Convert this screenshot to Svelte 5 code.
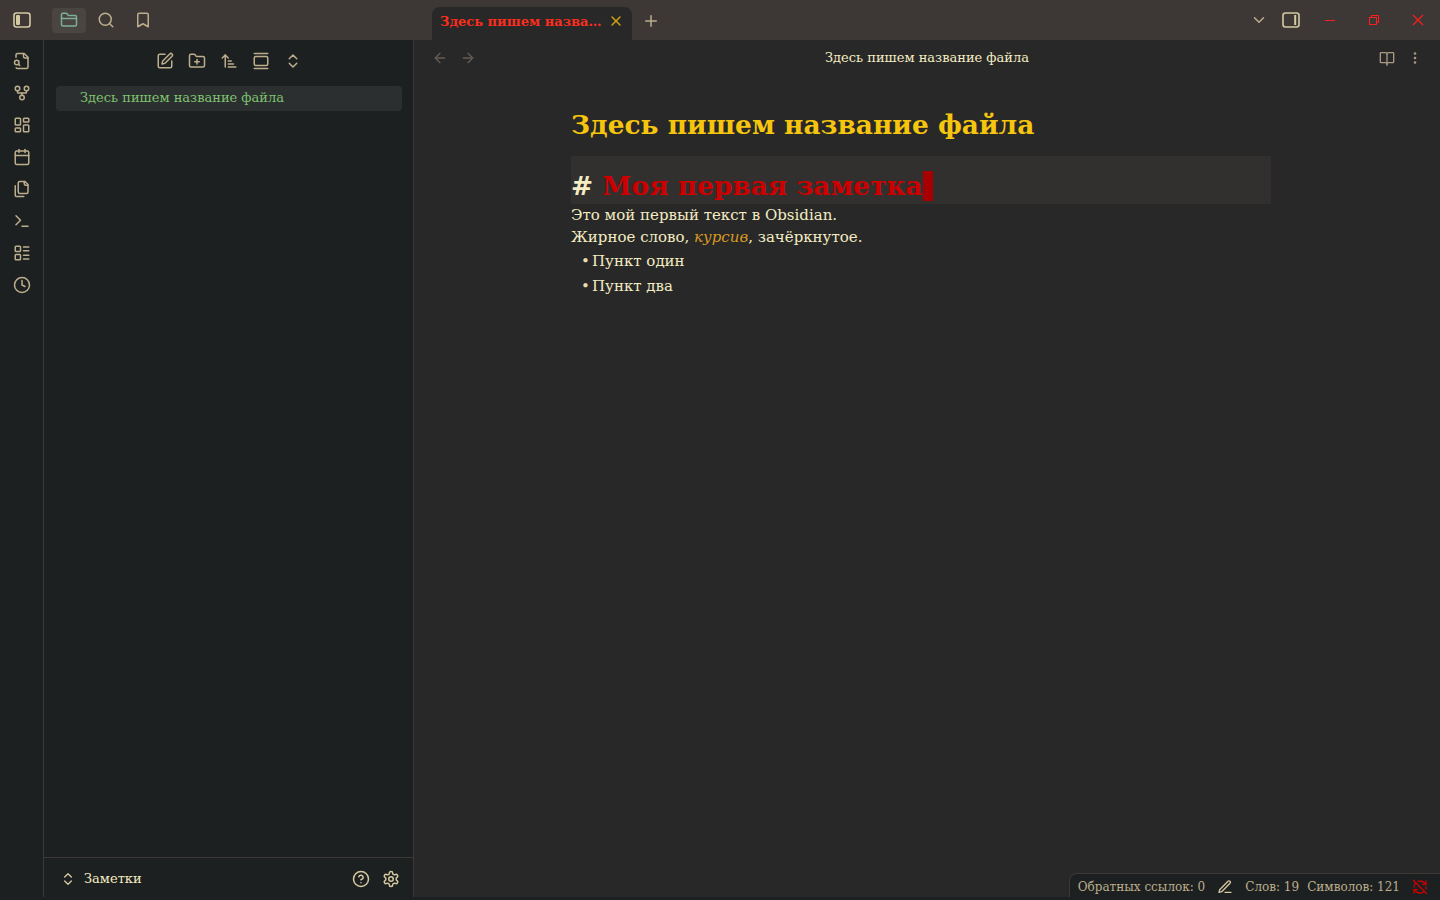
<script lang="ts">
  const icons: Record<string, string> = {
    folder: '<path d="M20 20a2 2 0 0 0 2-2V8a2 2 0 0 0-2-2h-7.9a2 2 0 0 1-1.69-.9L9.6 3.9A2 2 0 0 0 7.93 3H4a2 2 0 0 0-2 2v13a2 2 0 0 0 2 2Z"/><path d="M2 10h20"/>',
    search: '<circle cx="11" cy="11" r="8"/><path d="m21 21-4.3-4.3"/>',
    bookmark: '<path d="m19 21-7-4-7 4V5a2 2 0 0 1 2-2h10a2 2 0 0 1 2 2v16z"/>',
    pen: '<path d="M12 3H5a2 2 0 0 0-2 2v14a2 2 0 0 0 2 2h14a2 2 0 0 0 2-2v-7"/><path d="M18.375 2.625a1 1 0 0 1 3 3l-9.013 9.014a2 2 0 0 1-.853.505l-2.873.84a.5.5 0 0 1-.62-.62l.84-2.873a2 2 0 0 1 .506-.852z"/>',
    folderPlus: '<path d="M12 10v6"/><path d="M9 13h6"/><path d="M20 20a2 2 0 0 0 2-2V8a2 2 0 0 0-2-2h-7.9a2 2 0 0 1-1.69-.9L9.6 3.9A2 2 0 0 0 7.93 3H4a2 2 0 0 0-2 2v13a2 2 0 0 0 2 2Z"/>',
    sort: '<path d="m3 8 4-4 4 4"/><path d="M7 4v16"/><path d="M11 12h4"/><path d="M11 16h7"/><path d="M11 20h10"/>',
    gallery: '<path d="M3 2h18"/><rect x="3" y="6" width="18" height="12" rx="2"/><path d="M3 22h18"/>',
    chevrons: '<path d="m7 15 5 5 5-5"/><path d="m7 9 5-5 5 5"/>',
    fileSearch: '<path d="M14 2v4a2 2 0 0 0 2 2h4"/><path d="M4.268 21a2 2 0 0 0 1.727 1H18a2 2 0 0 0 2-2V7l-5-5H6a2 2 0 0 0-2 2v3"/><path d="m9 18-1.5-1.5"/><circle cx="5" cy="14" r="3"/>',
    fork: '<circle cx="12" cy="18" r="3"/><circle cx="6" cy="6" r="3"/><circle cx="18" cy="6" r="3"/><path d="M18 9v2c0 .6-.4 1-1 1H7c-.6 0-1-.4-1-1V9"/><path d="M12 12v3"/>',
    dashboard: '<rect x="3" y="3" width="7" height="9" rx="1"/><rect x="14" y="3" width="7" height="5" rx="1"/><rect x="14" y="12" width="7" height="9" rx="1"/><rect x="3" y="16" width="7" height="5" rx="1"/>',
    calendar: '<path d="M8 2v4"/><path d="M16 2v4"/><rect x="3" y="4" width="18" height="18" rx="2"/><path d="M3 10h18"/>',
    files: '<path d="M20 7h-3a2 2 0 0 1-2-2V2"/><path d="M9 18a2 2 0 0 1-2-2V4a2 2 0 0 1 2-2h7l4 4v10a2 2 0 0 1-2 2Z"/><path d="M3 7.6v12.8A1.6 1.6 0 0 0 4.6 22h9.8"/>',
    terminal: '<path d="m4 17 6-6-6-6"/><path d="M12 19h8"/>',
    list: '<rect x="3" y="3" width="7" height="7" rx="1"/><rect x="3" y="14" width="7" height="7" rx="1"/><path d="M14 4h7"/><path d="M14 9h7"/><path d="M14 15h7"/><path d="M14 20h7"/>',
    clock: '<circle cx="12" cy="12" r="10"/><path d="M12 6v6l4 2"/>',
    chevronDown: '<path d="m6 9 6 6 6-6"/>',
    plus: '<path d="M5 12h14"/><path d="M12 5v14"/>',
    x: '<path d="M18 6 6 18"/><path d="m6 6 12 12"/>',
    left: '<path d="m12 19-7-7 7-7"/><path d="M19 12H5"/>',
    right: '<path d="M5 12h14"/><path d="m12 5 7 7-7 7"/>',
    book: '<path d="M12 6a2 2 0 0 0-2-2H3a1 1 0 0 0-1 1v13a1 1 0 0 0 1 1h7a2 2 0 0 1 2 2 2 2 0 0 1 2-2h7a1 1 0 0 0 1-1V5a1 1 0 0 0-1-1h-7a2 2 0 0 0-2 2z"/><path d="M12 6v17"/>',
    help: '<circle cx="12" cy="12" r="10"/><path d="M9.09 9a3 3 0 0 1 5.83 1c0 2-3 3-3 3"/><path d="M12 17h.01"/>',
    gear: '<path d="M12.22 2h-.44a2 2 0 0 0-2 2v.18a2 2 0 0 1-1 1.73l-.43.25a2 2 0 0 1-2 0l-.15-.08a2 2 0 0 0-2.73.73l-.22.38a2 2 0 0 0 .73 2.73l.15.1a2 2 0 0 1 1 1.72v.51a2 2 0 0 1-1 1.74l-.15.09a2 2 0 0 0-.73 2.73l.22.38a2 2 0 0 0 2.73.73l.15-.08a2 2 0 0 1 2 0l.43.25a2 2 0 0 1 1 1.73V20a2 2 0 0 0 2 2h.44a2 2 0 0 0 2-2v-.18a2 2 0 0 1 1-1.73l.43-.25a2 2 0 0 1 2 0l.15.08a2 2 0 0 0 2.73-.73l.22-.39a2 2 0 0 0-.73-2.73l-.15-.08a2 2 0 0 1-1-1.74v-.5a2 2 0 0 1 1-1.74l.15-.09a2 2 0 0 0 .73-2.73l-.22-.38a2 2 0 0 0-2.73-.73l-.15.08a2 2 0 0 1-2 0l-.43-.25a2 2 0 0 1-1-1.73V4a2 2 0 0 0-2-2z"/><circle cx="12" cy="12" r="3"/>',
    penLine: '<path d="M12 20h9"/><path d="M16.5 3.5a2.12 2.12 0 0 1 3 3L7 19l-4 1 1-4Z"/>',
    syncOff: '<path d="M21 8 18.74 5.74A9.75 9.75 0 0 0 12 3c-1 0-1.97.16-2.87.47"/><path d="M8 16H3v5"/><path d="M3 12c0-2.49 1-4.74 2.64-6.36"/><path d="m3 16 2.26 2.26A9.75 9.75 0 0 0 12 21c2.49 0 4.74-1 6.36-2.64"/><path d="M21 12c0 1-.16 1.97-.47 2.87"/><path d="M21 3v5h-5"/><path d="M22 22 2 2"/>'
  };

  const ribbon = ["fileSearch", "fork", "dashboard", "calendar", "files", "terminal", "list", "clock"];
  const navTools = ["pen", "folderPlus", "sort", "gallery", "chevrons"];
</script>

{#snippet icon(name: string, size = 18, cls = "")}
  <svg class={cls} width={size} height={size} viewBox="0 0 24 24" fill="none" stroke="currentColor" stroke-width="2" stroke-linecap="round" stroke-linejoin="round">
    {@html icons[name]}
  </svg>
{/snippet}

<div class="app">
  <header class="titlebar">
    <div class="left-tabs">
      <button class="tb-btn sidebar-toggle">
        <svg width="18" height="18" viewBox="0 0 18 18" fill="none">
          <rect x="1" y="2" width="16" height="14" rx="2.5" stroke="currentColor" stroke-width="1.6" />
          <rect x="3" y="4" width="4" height="10" rx="1" fill="currentColor" />
        </svg>
      </button>
      <div class="nav-tabs">
        <button class="tb-btn nav-tab active">{@render icon("folder", 18)}</button>
        <button class="tb-btn nav-tab">{@render icon("search", 18)}</button>
        <button class="tb-btn nav-tab">{@render icon("bookmark", 18)}</button>
      </div>
    </div>

    <div class="tabstrip">
      <div class="tab">
        <span class="tab-title">Здесь пишем название файла</span>
        {@render icon("x", 16, "tab-close")}
      </div>
      <button class="tb-btn new-tab">{@render icon("plus", 18)}</button>
    </div>

    <div class="right-controls">
      <button class="tb-btn chevron">{@render icon("chevronDown", 18)}</button>
      <button class="tb-btn right-toggle">
        <svg width="18" height="18" viewBox="0 0 18 18" fill="none">
          <rect x="1" y="2" width="16" height="14" rx="2.5" stroke="currentColor" stroke-width="1.6" />
          <rect x="12.2" y="4" width="2" height="10" fill="currentColor" />
        </svg>
      </button>
      <div class="win-controls">
        <button class="win-btn" aria-label="Свернуть">
          <svg width="12" height="12" viewBox="0 0 12 12"><path d="M1 6.5h10" stroke="currentColor" stroke-width="1" /></svg>
        </button>
        <button class="win-btn" aria-label="Развернуть">
          <svg width="12" height="12" viewBox="0 0 12 12" fill="none" stroke="currentColor"><rect x="1.5" y="3.5" width="7" height="7" /><path d="M3.5 3.5v-2h7v7h-2" /></svg>
        </button>
        <button class="win-btn" aria-label="Закрыть">
          <svg width="12" height="12" viewBox="0 0 12 12"><path d="M1 1l10 10M11 1L1 11" stroke="currentColor" stroke-width="1.2" /></svg>
        </button>
      </div>
    </div>
  </header>

  <div class="body">
    <aside class="ribbon">
      {#each ribbon as name}
        <button class="ribbon-btn">{@render icon(name, 18)}</button>
      {/each}
    </aside>

    <section class="sidebar">
      <div class="nav-header">
        {#each navTools as name}
          <button class="nav-tool">{@render icon(name, 18)}</button>
        {/each}
      </div>
      <div class="file-tree">
        <div class="file-item">Здесь пишем название файла</div>
      </div>
      <div class="vault-bar">
        {@render icon("chevrons", 16, "vault-chevrons")}
        <span class="vault-name">Заметки</span>
        <div class="vault-actions">
          {@render icon("help", 18)}
          {@render icon("gear", 18)}
        </div>
      </div>
    </section>

    <main class="editor">
      <div class="view-header">
        <div class="view-nav">
          {@render icon("left", 16)}
          {@render icon("right", 16)}
        </div>
        <div class="view-title">Здесь пишем название файла</div>
        <div class="view-actions">
          {@render icon("book", 16)}
          <svg width="16" height="16" viewBox="0 0 16 16" fill="currentColor"><circle cx="8" cy="3.5" r="1.3" /><circle cx="8" cy="8" r="1.3" /><circle cx="8" cy="12.5" r="1.3" /></svg>
        </div>
      </div>

      <div class="scroller">
        <div class="note">
          <div class="inline-title">Здесь пишем название файла</div>
          <div class="active-line"><span class="hash">#&nbsp;</span><span class="h1">Моя первая заметка</span><span class="cursor"></span></div>
          <div class="line">Это мой первый текст в Obsidian.</div>
          <div class="line">Жирное слово, <em>курсив</em>, зачёркнутое.</div>
          <ul>
            <li>Пункт один</li>
            <li>Пункт два</li>
          </ul>
        </div>
      </div>

      <footer class="status-bar">
        <span>Обратных ссылок: 0</span>
        {@render icon("penLine", 16, "status-pen")}
        <span>Слов: 19</span>
        <span>Символов: 121</span>
        {@render icon("syncOff", 16, "status-sync")}
      </footer>
    </main>
  </div>
</div>

<style>
  :global(body) {
    margin: 0;
    background: #1d2021;
  }

  .app {
    display: flex;
    flex-direction: column;
    width: 1440px;
    height: 900px;
    overflow: hidden;
    font-family: "DejaVu Serif", serif;
    color: #f4ecc2;
  }

  button {
    background: none;
    border: none;
    padding: 0;
    color: inherit;
    font: inherit;
    display: flex;
    align-items: center;
    justify-content: center;
  }

  svg {
    display: block;
    flex: none;
  }

  .titlebar {
    display: flex;
    height: 40px;
    flex: none;
    background: #3d3835;
    color: #bcae8c;
  }

  .left-tabs {
    display: flex;
    width: 432px;
    flex: none;
    align-items: center;
  }

  .sidebar-toggle {
    width: 44px;
    color: #d5c9a1;
  }

  .nav-tabs {
    display: flex;
    gap: 3px;
    margin-left: 8px;
  }

  .nav-tab {
    width: 34px;
    height: 25px;
    border-radius: 4px;
  }

  .nav-tab.active {
    background: #4a4541;
    color: #7dae9c;
  }

  .tabstrip {
    display: flex;
    flex: 1;
    align-items: flex-end;
    height: 40px;
  }

  .tab {
    display: flex;
    align-items: center;
    justify-content: space-between;
    width: 200px;
    height: 33px;
    box-sizing: border-box;
    padding: 0 8px 5px 8px;
    background: #282828;
    border-radius: 8px 8px 0 0;
  }

  .tab-title {
    width: 163px;
    overflow: hidden;
    white-space: nowrap;
    text-overflow: ellipsis;
    color: #fb2e1e;
    font-size: 13px;
    font-weight: 700;
  }

  :global(.tab-close) {
    color: #d7a116;
  }

  .new-tab {
    width: 38px;
    height: 40px;
    padding-top: 2px;
  }

  .right-controls {
    display: flex;
    align-items: center;
  }

  .chevron {
    width: 18px;
    margin-right: 14px;
  }

  .right-toggle {
    color: #d5c9a1;
    width: 18px;
  }

  .win-controls {
    display: flex;
    margin-left: 8px;
    color: #fb1e1e;
  }

  .win-btn {
    width: 44px;
    height: 40px;
  }

  .body {
    display: flex;
    flex: 1;
    min-height: 0;
    margin-bottom: 3px;
  }

  .ribbon {
    display: flex;
    flex-direction: column;
    flex: none;
    box-sizing: border-box;
    width: 44px;
    padding-top: 5px;
    border-right: 1px solid #3c3836;
    background: #1d2021;
    color: #bcae8c;
  }

  .ribbon-btn {
    width: 43px;
    height: 32px;
  }

  .sidebar {
    display: flex;
    flex-direction: column;
    flex: none;
    box-sizing: border-box;
    width: 370px;
    border-right: 1px solid #3c3836;
    background: #1d2021;
  }

  .nav-header {
    display: flex;
    justify-content: center;
    gap: 8px;
    padding-top: 9px;
    color: #bcae8c;
  }

  .nav-tool {
    width: 24px;
    height: 24px;
  }

  .file-tree {
    flex: 1;
    padding: 13px 11px 0 12px;
  }

  .file-item {
    height: 25px;
    line-height: 24px;
    padding-left: 24px;
    border-radius: 4px;
    background: #2b2f30;
    color: #7ec16e;
    font-size: 13px;
  }

  .vault-bar {
    display: flex;
    align-items: center;
    box-sizing: border-box;
    height: 40px;
    padding: 2px 13px 0 16px;
    border-top: 1px solid #3c3836;
    font-size: 13px;
  }

  :global(.vault-chevrons) {
    color: #d5c9a1;
  }

  .vault-name {
    margin-left: 8px;
  }

  .vault-actions {
    display: flex;
    gap: 12px;
    margin-left: auto;
    color: #d5c9a1;
  }

  .editor {
    position: relative;
    flex: 1;
    display: flex;
    flex-direction: column;
    background: #282828;
    min-width: 0;
  }

  .view-header {
    display: flex;
    align-items: center;
    height: 35px;
    padding: 0 17px 0 18px;
  }

  .view-nav {
    display: flex;
    gap: 12px;
    color: #665c54;
  }

  .view-title {
    flex: 1;
    text-align: center;
    font-size: 13px;
    padding-right: 1px;
  }

  .view-actions {
    display: flex;
    gap: 12px;
    color: #a89984;
    padding-top: 1px;
  }

  .scroller {
    flex: 1;
    padding-right: 12px;
  }

  .note {
    width: 700px;
    margin: 0 auto;
    padding-top: 31px;
    font-size: 15px;
    line-height: 22px;
  }

  .inline-title {
    color: #f6c50e;
    font-size: 26.45px;
    line-height: 38px;
    font-weight: 700;
    margin-bottom: 12px;
  }

  .active-line {
    height: 48px;
    box-sizing: border-box;
    padding-top: 12px;
    background: #32302f;
    font-size: 26.4px;
    line-height: 36px;
    font-weight: 700;
    white-space: pre;
  }

  .h1 {
    color: #cc0000;
  }

  .cursor {
    display: inline-block;
    width: 10px;
    height: 30px;
    background: #a80000;
    vertical-align: -6px;
  }

  em {
    color: #d79921;
  }

  ul {
    list-style: none;
    margin: 1px 0 0;
    padding: 0 0 0 10px;
  }

  li {
    height: 25px;
    line-height: 25px;
  }

  li::before {
    content: "•";
    display: inline-block;
    width: 11px;
    color: #ebdbb2;
  }

  .status-bar {
    position: absolute;
    right: 0;
    bottom: 0;
    display: flex;
    align-items: center;
    gap: 8px;
    height: 24px;
    box-sizing: border-box;
    padding: 3px 12px 0 8px;
    background: #1d2021;
    border: 1px solid #3c3836;
    border-width: 1px 0 0 1px;
    border-top-left-radius: 8px;
    color: #bcae8c;
    font-size: 12px;
  }

  :global(.status-pen) {
    color: #d5c9a1;
    margin: 0 4px;
  }

  :global(.status-sync) {
    color: #cc0000;
    margin-left: 4px;
  }
</style>
